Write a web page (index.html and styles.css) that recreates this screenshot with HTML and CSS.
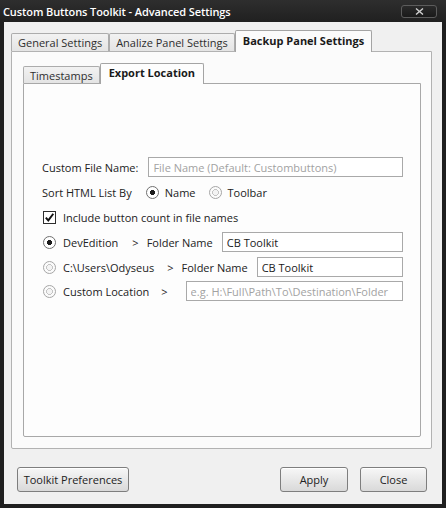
FILE: index.html
```html
<!DOCTYPE html>
<html>
<head>
<meta charset="utf-8">
<link rel="stylesheet" href="styles.css">
</head>
<body>
<div class="window">
  <div class="titlebar">
    <span class="title">Custom Buttons Toolkit - Advanced Settings</span>
    <span class="closebox"><svg width="9" height="7" viewBox="0 0 9 7"><path d="M1 0.5 L8 6.5 M8 0.5 L1 6.5" stroke="#cfcfcf" stroke-width="1.4"/></svg></span>
  </div>
  <div class="client">
    <div class="tabstrip">
      <div class="tab">General Settings</div>
      <div class="tab">Analize Panel Settings</div>
      <div class="tab selected">Backup Panel Settings</div>
    </div>
    <div class="panel outer">
      <div class="tabstrip inner-strip">
        <div class="tab">Timestamps</div>
        <div class="tab selected">Export Location</div>
      </div>
      <div class="panel inner">
        <div class="form">
          <div class="row">
            <span class="label">Custom File Name:</span>
            <input class="field f-name" type="text" placeholder="File Name (Default: Custombuttons)">
          </div>
          <div class="row">
            <span class="label">Sort HTML List By</span>
            <span class="radio on sort-first"></span><span class="rtext">Name</span>
            <span class="radio sort-second"></span><span class="rtext">Toolbar</span>
          </div>
          <div class="row">
            <span class="check"><svg width="11" height="11" viewBox="0 0 11 11"><path d="M1.8 5.6 L4.3 8.4 L9.3 1.8" fill="none" stroke="#111" stroke-width="1.9"/></svg></span>
            <span class="ctext">Include button count in file names</span>
          </div>
          <div class="row">
            <span class="radio on lead"></span><span class="rtext loc w-dev">DevEdition</span>
            <span class="arrow">&gt;</span><span class="folder">Folder Name</span>
            <input class="field f-folder" type="text" value="CB Toolkit">
          </div>
          <div class="row">
            <span class="radio lead"></span><span class="rtext loc w-user">C:\Users\Odyseus</span>
            <span class="arrow">&gt;</span><span class="folder">Folder Name</span>
            <input class="field f-folder" type="text" value="CB Toolkit">
          </div>
          <div class="row last">
            <span class="radio lead"></span><span class="rtext loc w-custom">Custom Location</span>
            <span class="arrow">&gt;</span>
            <input class="field f-custom" type="text" placeholder="e.g. H:\Full\Path\To\Destination\Folder">
          </div>
        </div>
      </div>
    </div>
    <div class="buttons">
      <div class="btn b-prefs">Toolkit Preferences</div>
      <div class="spacer"></div>
      <div class="btn b-apply">Apply</div>
      <div class="btn b-close">Close</div>
    </div>
  </div>
</div>
</body>
</html>
```
FILE: styles.css
```css
* { box-sizing: border-box; }
html, body { margin: 0; padding: 0; }
body {
  width: 446px;
  height: 508px;
  overflow: hidden;
  background: #1e1e1e;
  font-family: "Open Sans", "DejaVu Sans", sans-serif;
  font-size: 11px;
  color: #222222;
}
.window {
  width: 446px;
  height: 508px;
  display: flex;
  flex-direction: column;
  background: #1f1f1f;
}
.titlebar {
  height: 22px;
  flex: none;
  display: flex;
  align-items: center;
  padding: 1px 9px 0 3px;
  background: linear-gradient(#2e2e2e, #202020);
}
.title {
  flex: 1;
  color: #ffffff;
  font-weight: 600;
  font-size: 11px;
  letter-spacing: -0.1px;
}
.closebox {
  width: 36px;
  height: 13px;
  margin-top: -1px;
  border: 1px solid #5c5c5c;
  border-radius: 3px;
  background: linear-gradient(#2a2a2a, #1a1a1a);
  display: flex;
  align-items: center;
  justify-content: center;
}
.closebox svg { display: block; }
.client {
  flex: 1;
  margin: 0 4px 4px 4px;
  background: #f0f0f0;
  display: flex;
  flex-direction: column;
  padding: 8px 10px 12px 7px;
}
.tabstrip {
  height: 21px;
  flex: none;
  display: flex;
  align-items: flex-end;
}
.tab {
  height: 18px;
  padding: 0 6px;
  border: 1px solid #acacac;
  border-bottom: none;
  border-radius: 2px 2px 0 0;
  background: linear-gradient(#f2f2f2, #e4e4e4);
  display: flex;
  align-items: center;
  white-space: nowrap;
  color: #2e2e2e;
}
.tab.selected {
  height: 22px;
  margin-bottom: -1px;
  padding: 0 7px 3px 7px;
  background: #fbfbfb;
  font-weight: 700;
  color: #1a1a1a;
  position: relative;
  z-index: 1;
  border-color: #a4a4a4;
}
.panel {
  border: 1px solid #b2b2b2;
  display: flex;
  flex-direction: column;
}
.panel.outer {
  flex: 1;
  background: #fbfbfb;
  border-radius: 0 0 2px 2px;
  padding: 11px 10px 11px 11px;
}
.inner-strip { height: 20px; }
.inner-strip .tab { height: 17px; padding: 0 6px; }
.inner-strip .tab.selected { height: 21px; padding: 0 8px 3px 8px; background: #fdfdfd; }
.panel.inner {
  flex: 1;
  background: #fdfdfd;
  border-color: #a8a8a8;
  border-radius: 0 0 2px 2px;
}
.form {
  padding: 73px 17px 0 18px;
  display: flex;
  flex-direction: column;
  gap: 5px;
}
.row {
  height: 20px;
  display: flex;
  align-items: center;
  white-space: nowrap;
}
.row.last { margin-top: -1px; }
.field {
  height: 20px;
  border: 1px solid #a9a9a9;
  background: #ffffff;
  padding: 0 4px;
  font-family: "Open Sans", "DejaVu Sans", sans-serif;
  font-size: 11px;
  color: #1a1a1a;
  outline: none;
  margin: 0;
  flex: 1;
  min-width: 0;
}
.field::placeholder { color: #a2a2a2; }
.f-name { margin-left: 10px; }
.f-folder { margin-left: 9px; }
.f-custom { margin-left: 18px; }
.radio {
  width: 13px;
  height: 13px;
  flex: none;
  border-radius: 50%;
  border: 1px solid #a6a6a6;
  background: radial-gradient(circle, #f3f3f3 0 2.4px, #c4c4c4 2.6px 3.4px, #fbfbfb 3.6px);
}
.radio.on {
  border-color: #707070;
  background: radial-gradient(circle, #1c1c1c 0 2.3px, #ffffff 2.6px);
}
.sort-first { margin-left: 14px; }
.sort-second { margin-left: 13px; }
.lead { margin-left: 1px; }
.rtext { margin-left: 6px; }
.loc { margin-left: 7px; }
.check {
  width: 13px;
  height: 13px;
  flex: none;
  margin-left: 1px;
  border: 1px solid #2e2e2e;
  background: #ffffff;
  display: flex;
  align-items: center;
  justify-content: center;
}
.check svg { display: block; }
.ctext { margin-left: 7px; }
.arrow { margin-left: 14px; }
.w-user + .arrow { margin-left: 13px; }
.w-custom + .arrow { margin-left: 12px; }
.folder { margin-left: 8px; }
.buttons {
  height: 25px;
  flex: none;
  margin: 18px 5px 0 6px;
  display: flex;
}
.spacer { flex: 1; }
.btn {
  height: 25px;
  border: 1px solid #7e7e7e;
  border-radius: 3px;
  background: linear-gradient(#f7f7f7, #e8e8e8 50%, #d9d9d9);
  box-shadow: inset 0 1px 0 #ffffff;
  display: flex;
  align-items: center;
  justify-content: center;
  color: #222222;
  white-space: nowrap;
}
.b-prefs { width: 112px; }
.b-apply { width: 68px; }
.b-close { width: 67px; margin-left: 12px; }
```
